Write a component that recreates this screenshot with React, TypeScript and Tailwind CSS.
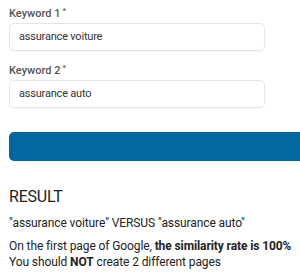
export default function App() {
  return (
    <div className="w-[300px] h-[272px] overflow-hidden bg-white pl-[9px] pt-[7px] font-['Roboto',sans-serif]">
      <Field label="Keyword 1" value="assurance voiture" />
      <div className="h-[13px]" />
      <Field label="Keyword 2" value="assurance auto" />
      <div className="mt-[24px] h-[29px] w-[320px] rounded-[5px] bg-[#0567a0]" />
      <h2 className="mt-[26px] text-[16px] leading-[20px] tracking-[-0.2px] text-[#222]">RESULT</h2>
      <p className="mt-[8px] text-[12px] leading-[16px] tracking-[-0.1px] text-[#222]">
        "assurance voiture" VERSUS "assurance auto"
      </p>
      <p className="mt-[7px] text-[12px] leading-[16px] tracking-[-0.1px] text-[#222]">
        On the first page of Google, <b>the similarity rate is 100%</b>
        <br />
        You should <b>NOT</b> create 2 different pages
      </p>
    </div>
  );
}

function Field({ label, value }: { label: string; value: string }) {
  return (
    <div>
      <div className="text-[11px] leading-[14px] font-medium text-[#555]">
        {label}
        <sup className="ml-[2px] text-[8px]">*</sup>
      </div>
      <div className="mt-[2px] flex h-[28px] w-[256px] items-center rounded-[5px] border border-[#e5e5e5] px-[9px] text-[11px] tracking-[-0.2px] text-[#333] shadow-[0_1px_1px_rgba(0,0,0,0.03)]">
        {value}
      </div>
    </div>
  );
}
